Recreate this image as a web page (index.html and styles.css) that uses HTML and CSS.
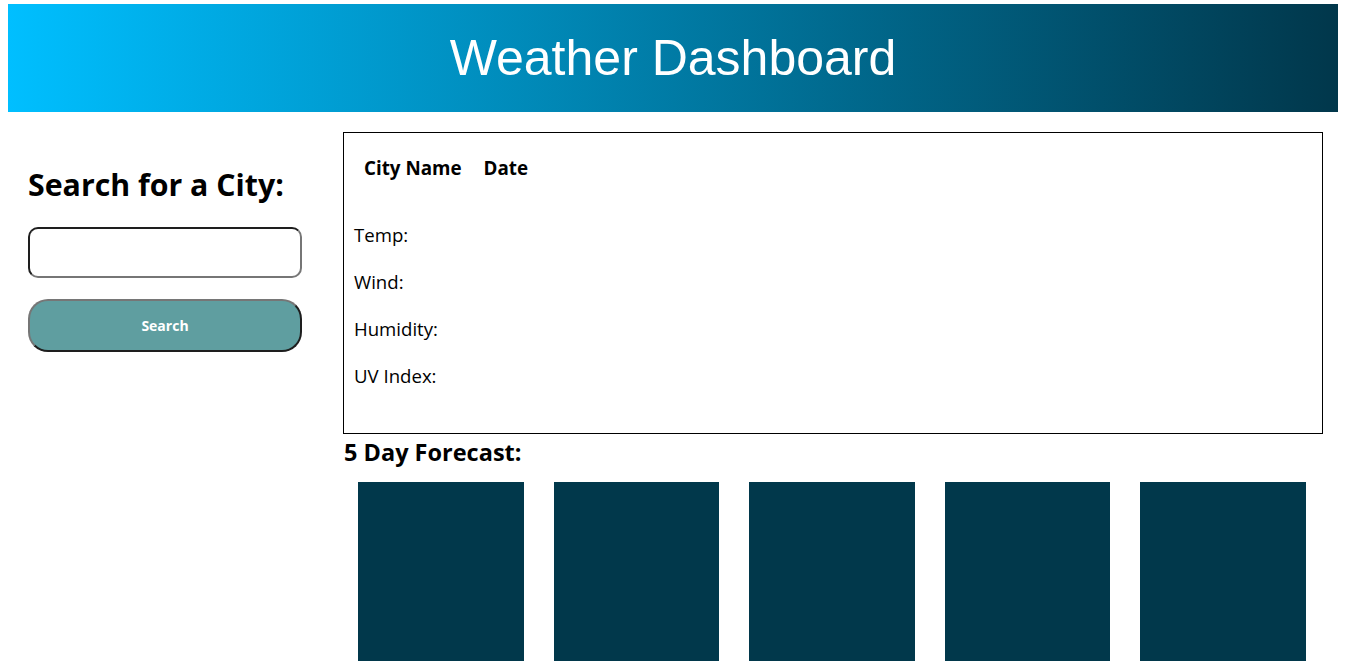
FILE: index.html
```html
<!DOCTYPE html>
<html lang="en">
<head>
<meta charset="utf-8">
<title>Weather Dashboard</title>
<link rel="stylesheet" href="styles.css">
</head>
<body>
  <header class="banner">
    <h1 class="banner-title">Weather Dashboard</h1>
  </header>
  <div class="layout">
    <aside class="search">
      <h2 class="search-title">Search for a City:</h2>
      <input class="search-input" type="text" aria-label="City">
      <button class="search-btn" type="button">Search</button>
    </aside>
    <main class="content">
      <section class="current">
        <h3 class="current-head"><span>City Name</span><span>Date</span></h3>
        <div class="current-rows">
          <p class="row">Temp:</p>
          <p class="row">Wind:</p>
          <p class="row">Humidity:</p>
          <p class="row">UV Index:</p>
        </div>
      </section>
      <h3 class="forecast-title">5 Day Forecast:</h3>
      <div class="forecast">
        <div class="card"></div>
        <div class="card"></div>
        <div class="card"></div>
        <div class="card"></div>
        <div class="card"></div>
      </div>
    </main>
  </div>
</body>
</html>
```

FILE: styles.css
```css
* { box-sizing: border-box; }

body {
  margin: 4px 8px 8px;
  font-family: "Open Sans", "Noto Sans", sans-serif;
  color: #000;
  background: #fff;
}

.banner {
  height: 108px;
  background: linear-gradient(to right, #00bfff, #01374b);
  display: flex;
  align-items: center;
  justify-content: center;
}

.banner-title {
  margin: 0;
  font-family: "Liberation Sans", Arial, sans-serif;
  font-weight: 400;
  font-size: 50px;
  color: #fff;
  line-height: 1;
}

.layout {
  display: flex;
  margin-top: 20px;
}

.search {
  width: 335px;
  flex: none;
  padding: 0 20px;
  display: flex;
  flex-direction: column;
}

.search-title {
  margin: 28px 0 0;
  font-size: 30.3px;
  font-weight: 700;
  line-height: 50px;
  white-space: nowrap;
}

.search-input {
  margin-top: 17px;
  width: 274px;
  height: 51px;
  border: 2px solid;
  border-color: #1e1e1e #767676 #767676 #1e1e1e;
  border-radius: 10px;
  background: #fff;
}

.search-btn {
  margin-top: 21px;
  width: 274px;
  height: 53px;
  border: 2px solid;
  border-color: #767676 #1e1e1e #1e1e1e #767676;
  border-radius: 20px;
  background: #5f9ea0;
  color: #fff;
  font-family: inherit;
  font-weight: 700;
  font-size: 14px;
}

.content {
  flex: 1;
  margin-right: 15px;
}

.current {
  height: 302px;
  border: 1px solid #000;
  padding: 0 10px;
}

.current-head {
  margin: 22px 0 0;
  padding-left: 10px;
  display: flex;
  gap: 22px;
  font-size: 18.8px;
  font-weight: 700;
  line-height: 27px;
}

.current-rows {
  margin-top: 39px;
  display: flex;
  flex-direction: column;
  gap: 20px;
}

.row {
  margin: 0;
  font-size: 18.6px;
  line-height: 27px;
}

.forecast-title {
  margin: 3px 0 0 1px;
  font-size: 23.5px;
  font-weight: 700;
  line-height: 30px;
}

.forecast {
  margin: 15px 2px 0 0;
  display: flex;
  justify-content: space-around;
}

.card {
  width: 16.95%;
  height: 240px;
  background: #01384b;
}
```
